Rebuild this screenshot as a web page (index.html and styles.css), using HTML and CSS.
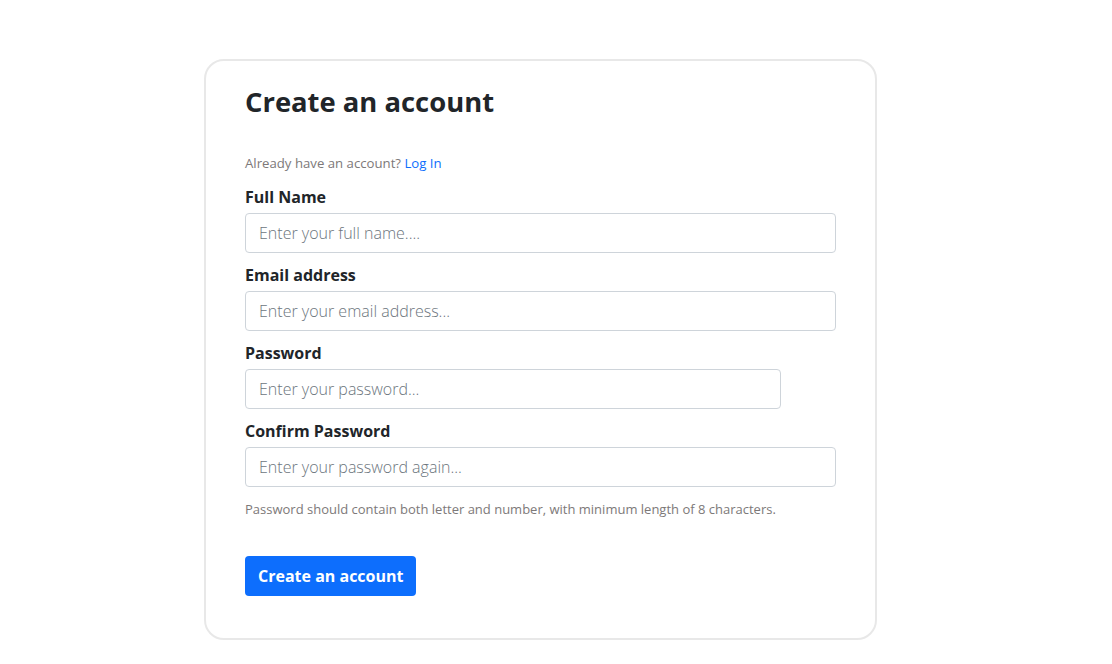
FILE: index.html
```html
<!DOCTYPE html>
<html lang="en">
<head>
<meta charset="utf-8">
<title>Create an account</title>
<link rel="stylesheet" href="styles.css">
</head>
<body>
<main class="page">
  <section class="card">
    <h1 class="title">Create an account</h1>
    <p class="login-hint">Already have an account? <a href="#" class="link">Log In</a></p>
    <form class="form">
      <div class="field">
        <label class="label" for="name">Full Name</label>
        <input class="input" id="name" type="text" placeholder="Enter your full name....">
      </div>
      <div class="field">
        <label class="label" for="email">Email address</label>
        <input class="input" id="email" type="email" placeholder="Enter your email address...">
      </div>
      <div class="field">
        <label class="label" for="pw">Password</label>
        <input class="input input-short" id="pw" type="password" placeholder="Enter your password...">
      </div>
      <div class="field">
        <label class="label" for="pw2">Confirm Password</label>
        <input class="input" id="pw2" type="password" placeholder="Enter your password again...">
      </div>
      <p class="help">Password should contain both letter and number, with minimum length of 8 characters.</p>
      <button type="button" class="btn">Create an account</button>
    </form>
  </section>
</main>
</body>
</html>
```

FILE: styles.css
```css
* { box-sizing: border-box; }
html, body { margin: 0; padding: 0; background: #fff; }
body {
  font-family: "Open Sans", "Noto Sans", sans-serif;
  color: #212529;
}
.page {
  padding: 59px 0 0 204px;
}
.card {
  width: 673px;
  border: 2px solid #e8e8e8;
  border-radius: 20px;
  padding: 21px 39px 42px;
}
.title {
  margin: 0;
  font-size: 27.4px;
  font-weight: 700;
  line-height: 40px;
  color: #212529;
}
.login-hint {
  margin: 32px 0 0;
  font-size: 13.2px;
  line-height: 18px;
  color: #7d7979;
}
.link { color: #0d6efd; text-decoration: none; }
.form { display: flex; flex-direction: column; margin-top: 13px; }
.field { display: flex; flex-direction: column; margin-bottom: 10px; }
.label {
  font-size: 16px;
  font-weight: 700;
  line-height: 24px;
  margin-bottom: 4px;
  color: #212529;
}
.input {
  width: 100%;
  height: 40px;
  border: 1px solid #ced4da;
  border-radius: 4px;
  padding: 0 13px;
  font-family: inherit;
  font-size: 16px;
  font-weight: 300;
  color: #212529;
  background: #fff;
}
.input::placeholder { color: #6c757d; }
.input-short { width: 536px; }
.help {
  margin: 3px 0 0;
  font-size: 13px;
  line-height: 18px;
  color: #7d7979;
}
.btn {
  align-self: flex-start;
  margin-top: 38px;
  height: 40px;
  padding: 0 13px;
  border: none;
  border-radius: 4px;
  background: #0d6efd;
  color: #fff;
  font-family: inherit;
  font-size: 16px;
  font-weight: 700;
}
```
